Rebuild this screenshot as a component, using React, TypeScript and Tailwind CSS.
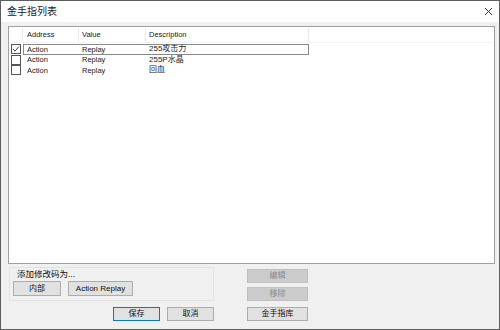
import React from "react";

const font = { fontFamily: '"Liberation Sans", "Noto Sans CJK SC", sans-serif' };

const rows = [
  { checked: true, address: "Action", value: "Replay", desc: "255攻击力" },
  { checked: false, address: "Action", value: "Replay", desc: "255P水晶" },
  { checked: false, address: "Action", value: "Replay", desc: "回血" },
];

function CheckBox({ checked }: { checked: boolean }) {
  return (
    <div className="w-[10px] h-[10px] border border-[#555] bg-white flex items-center justify-center">
      {checked && (
        <svg width="8" height="8" viewBox="0 0 8 8">
          <path d="M1 4 L3 6.2 L7 1.5" fill="none" stroke="#444" strokeWidth="1" />
        </svg>
      )}
    </div>
  );
}

function Btn({
  children,
  w,
  h = "h-[14px]",
  disabled,
  primary,
}: {
  children: React.ReactNode;
  w: string;
  h?: string;
  disabled?: boolean;
  primary?: boolean;
}) {
  const base = "flex items-center justify-center text-[8px] leading-none border";
  const tone = disabled
    ? "bg-[#cccccc] border-[#bfbfbf] text-[#8a8a8a]"
    : primary
    ? "bg-[#e1e1e1] border-[#0078d7] text-[#111]"
    : "bg-[#e1e1e1] border-[#adadad] text-[#111]";
  return <div className={`${base} ${tone} ${w} ${h}`}>{children}</div>;
}

export default function App() {
  return (
    <div
      className="w-[500px] h-[330px] border border-[#5c5c5c] bg-[#f0f0f0] flex flex-col overflow-hidden"
      style={font}
    >
      {/* Title bar */}
      <div className="h-[21px] bg-white flex items-center justify-between pl-[6px] pr-[6px] shrink-0">
        <span className="text-[10px] text-[#222]">金手指列表</span>
        <svg width="9" height="9" viewBox="0 0 9 9">
          <path d="M1 1 L8 8 M8 1 L1 8" stroke="#333" strokeWidth="1" />
        </svg>
      </div>

      {/* List */}
      <div className="ml-[7px] mt-[4px] w-[487px] h-[238px] border border-[#a0a0a0] bg-white text-[7.5px] text-[#222] shrink-0">
        <div className="h-[15px] mt-[1px] flex items-center border-b border-[#f3f3f3]">
          <div className="w-[14px] h-full border-r border-[#ececec]" />
          <div className="w-[56px] h-full pl-[4px] flex items-center border-r border-[#ececec]">Address</div>
          <div className="w-[67px] h-full pl-[3px] flex items-center border-r border-[#ececec]">Value</div>
          <div className="w-[163px] h-full pl-[3px] flex items-center border-r border-[#ececec]">Description</div>
        </div>
        <div className="mt-[1px]">
          {rows.map((r, i) => (
            <div key={i} className="h-[10.5px] flex items-center">
              <div className="w-[14px] pl-[2px] flex items-center">
                <CheckBox checked={r.checked} />
              </div>
              <div
                className={`h-full flex items-center w-[286px] ${
                  i === 0 ? "border border-[#8a8a8a]" : "border border-transparent"
                }`}
              >
                <div className="w-[55px] pl-[3px]">{r.address}</div>
                <div className="w-[67px] pl-[3px]">{r.value}</div>
                <div className="pl-[3px] text-[8px]">{r.desc}</div>
              </div>
            </div>
          ))}
        </div>
      </div>

      {/* Bottom controls */}
      <div className="flex mt-[3px]">
        <div className="ml-[8px] w-[205px] flex flex-col">
          <div className="h-[34px] border border-[#e3e3e3] pl-[3px] pt-[1px]">
            <div className="text-[8.5px] text-[#111] leading-[11px] pl-[4px]">添加修改码为...</div>
            <div className="flex gap-[7px] mt-[1px]">
              <Btn w="w-[48px]" h="h-[15px]">内部</Btn>
              <Btn w="w-[65px]" h="h-[15px]">Action Replay</Btn>
            </div>
          </div>
          <div className="flex justify-end gap-[7px] mt-[6px]">
            <Btn w="w-[47px]" primary>
              保存
            </Btn>
            <Btn w="w-[47px]">取消</Btn>
          </div>
        </div>
        <div className="ml-[33px] mt-[2px] flex flex-col">
          <Btn w="w-[61px]" disabled>
            编辑
          </Btn>
          <div className="mt-[4px]">
            <Btn w="w-[61px]" disabled>
              移除
            </Btn>
          </div>
          <div className="mt-[6px]">
            <Btn w="w-[61px]">金手指库</Btn>
          </div>
        </div>
      </div>
    </div>
  );
}
